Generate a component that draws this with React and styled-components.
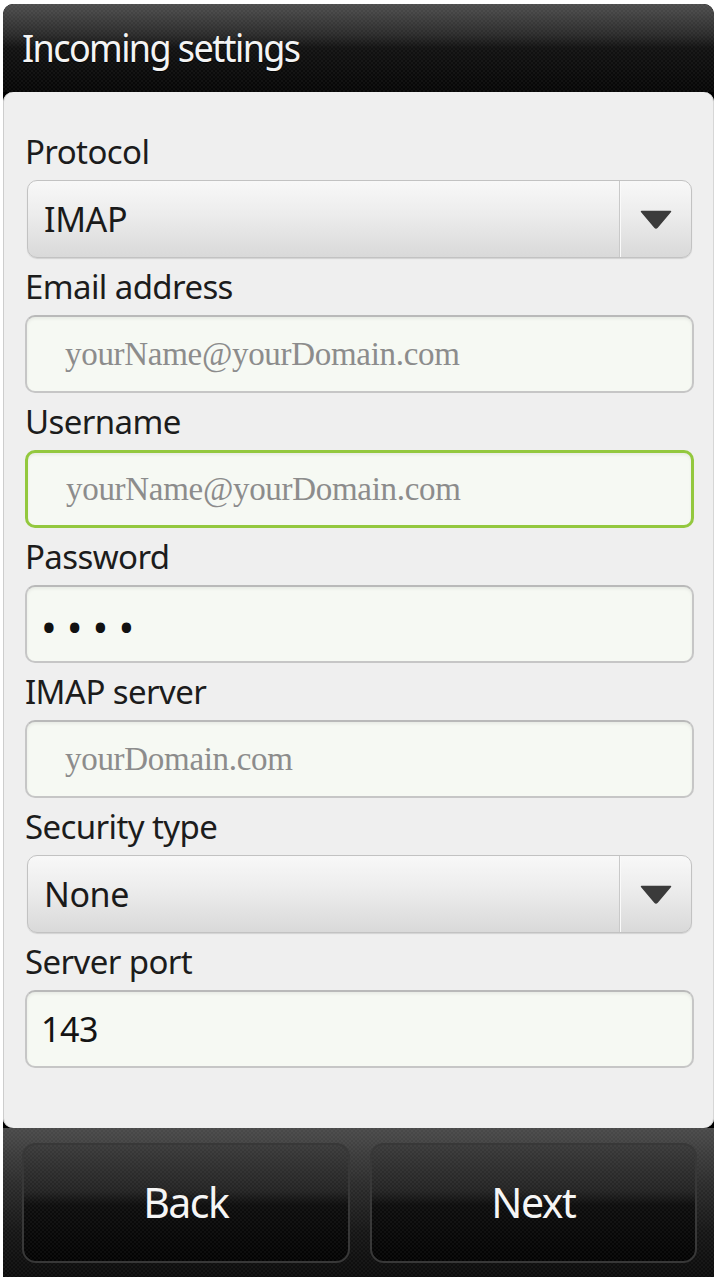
import React from "react";
import styled, { createGlobalStyle } from "styled-components";

const Global = createGlobalStyle`
  html, body { margin: 0; padding: 0; background: #ffffff; }
  body { font-family: "Noto Sans", "DejaVu Sans", sans-serif; }
  * { box-sizing: border-box; }
`;

const texture = `repeating-conic-gradient(rgba(255,255,255,0.035) 0 25%, rgba(0,0,0,0) 0 50%)`;

const Screen = styled.div`
  width: 711px;
  height: 1273px;
  margin: 4px 6px 3px 3px;
  display: flex;
  flex-direction: column;
  background: #000;
  border-radius: 10px 10px 0 0;
  overflow: hidden;
`;

const TitleBar = styled.header`
  height: 88px;
  flex: none;
  display: flex;
  align-items: flex-start;
  padding: 18px 0 0 19px;
  background-image: ${texture},
    linear-gradient(180deg, #4d4d4d 0%, #2c2c2c 34%, #121212 50%, #060606 100%);
  background-size: 4px 4px, 100% 100%;
  border-radius: 10px 10px 0 0;
`;

const Title = styled.h1`
  margin: 0;
  font-family: "Noto Sans", sans-serif;
  font-weight: 400;
  font-size: 36px;
  line-height: 52px;
  letter-spacing: -1.6px;
  color: #f4f4f4;
  text-shadow: 0 1px 1px rgba(0, 0, 0, 0.8);
  transform: scaleY(1.08);
  transform-origin: left center;
`;

const Panel = styled.main`
  flex: 1;
  display: flex;
  flex-direction: column;
  gap: 9px;
  padding: 40px 20px 0 22px;
  background: #efefef;
  border-radius: 10px;
  box-shadow: inset 1px 0 0 #cdcdcd, inset -1px 0 0 #d6d6d6;
`;

const Group = styled.section`
  display: flex;
  flex-direction: column;
  gap: 8px;
`;

const Label = styled.label`
  font-family: "Noto Sans", sans-serif;
  font-size: 33px;
  line-height: 40px;
  letter-spacing: -0.6px;
  color: #1c1c1c;
`;

const Spinner = styled.div`
  height: 78px;
  margin: 0 2px;
  display: flex;
  align-items: stretch;
  border: 1px solid #c2c2c2;
  border-radius: 10px;
  background: linear-gradient(180deg, #f8f8f8 0%, #ececec 45%, #d9d9d9 100%);
  box-shadow: 0 1px 1px rgba(0, 0, 0, 0.12);
`;

const SpinnerValue = styled.span`
  flex: 1;
  display: flex;
  align-items: center;
  padding-left: 16px;
  font-family: "Noto Sans", sans-serif;
  font-size: 34px;
  letter-spacing: -0.4px;
  color: #1a1a1a;
`;

const SpinnerArrow = styled.span`
  width: 72px;
  display: flex;
  align-items: center;
  justify-content: center;
  border-left: 1px solid #c9c9c9;
  box-shadow: inset 1px 0 0 #fafafa;
`;

const Field = styled.div`
  height: 78px;
  display: flex;
  align-items: center;
  padding-left: ${(p) => (p.$placeholder ? "38px" : "14px")};
  border: ${(p) => (p.$focused ? "3px solid #93c83e" : "2px solid #c6c6c6")};
  border-top-color: ${(p) => (p.$focused ? "#93c83e" : "#b9b9b9")};
  border-radius: 10px;
  background: #f6f9f3;
  box-shadow: inset 0 2px 3px rgba(0, 0, 0, 0.06);
`;

const Placeholder = styled.span`
  font-family: "Liberation Serif", "Times New Roman", serif;
  font-size: 33px;
  letter-spacing: -0.3px;
  color: #8c8c8c;
`;

const Value = styled.span`
  font-family: "Noto Sans", sans-serif;
  font-size: 34px;
  letter-spacing: -0.5px;
  color: #141414;
`;

const Dots = styled.span`
  font-family: "Noto Sans", sans-serif;
  font-size: 42px;
  letter-spacing: 10px;
  color: #111;
  padding-top: 4px;
`;

const BottomBar = styled.footer`
  height: 149px;
  flex: none;
  display: grid;
  grid-template-columns: 1fr 1fr;
  gap: 20px;
  padding: 15px 17px 14px 19px;
  background-image: ${texture},
    linear-gradient(180deg, #4a4a4a 0%, #2a2a2a 40%, #161616 70%, #0c0c0c 100%);
  background-size: 4px 4px, 100% 100%;
`;

const NavButton = styled.button`
  display: flex;
  align-items: center;
  justify-content: center;
  padding: 0 0 2px;
  border: 2px solid #383838;
  border-radius: 14px;
  background-image: ${texture},
    linear-gradient(180deg, #3a3a3a 0%, #232323 40%, #0d0d0d 52%, #030303 100%);
  background-size: 4px 4px, 100% 100%;
  font-family: "Noto Sans", sans-serif;
  font-size: 41px;
  letter-spacing: -1.5px;
  color: #f5f5f5;
  cursor: pointer;
`;

const Arrow = () => (
  <svg width="32" height="19" viewBox="0 0 32 19">
    <path d="M1.5 1.5 H30.5 L17.2 17.3 Q16 18.6 14.8 17.3 Z" fill="#3b3b3b" stroke="#3b3b3b" strokeWidth="1.5" strokeLinejoin="round" />
  </svg>
);

const fields = [
  { label: "Protocol", kind: "spinner", value: "IMAP" },
  { label: "Email address", kind: "placeholder", value: "yourName@yourDomain.com" },
  { label: "Username", kind: "placeholder", value: "yourName@yourDomain.com", focused: true },
  { label: "Password", kind: "dots", value: "••••" },
  { label: "IMAP server", kind: "placeholder", value: "yourDomain.com" },
  { label: "Security type", kind: "spinner", value: "None" },
  { label: "Server port", kind: "value", value: "143" },
];

function FieldContent({ f }) {
  if (f.kind === "placeholder") return <Placeholder>{f.value}</Placeholder>;
  if (f.kind === "dots") return <Dots>{f.value}</Dots>;
  return <Value>{f.value}</Value>;
}

export default function App() {
  return (
    <>
      <Global />
      <Screen>
        <TitleBar>
          <Title>Incoming settings</Title>
        </TitleBar>
        <Panel>
          {fields.map((f) => (
            <Group key={f.label}>
              <Label>{f.label}</Label>
              {f.kind === "spinner" ? (
                <Spinner>
                  <SpinnerValue>{f.value}</SpinnerValue>
                  <SpinnerArrow>
                    <Arrow />
                  </SpinnerArrow>
                </Spinner>
              ) : (
                <Field $focused={f.focused} $placeholder={f.kind === "placeholder"}>
                  <FieldContent f={f} />
                </Field>
              )}
            </Group>
          ))}
        </Panel>
        <BottomBar>
          <NavButton>Back</NavButton>
          <NavButton>Next</NavButton>
        </BottomBar>
      </Screen>
    </>
  );
}
